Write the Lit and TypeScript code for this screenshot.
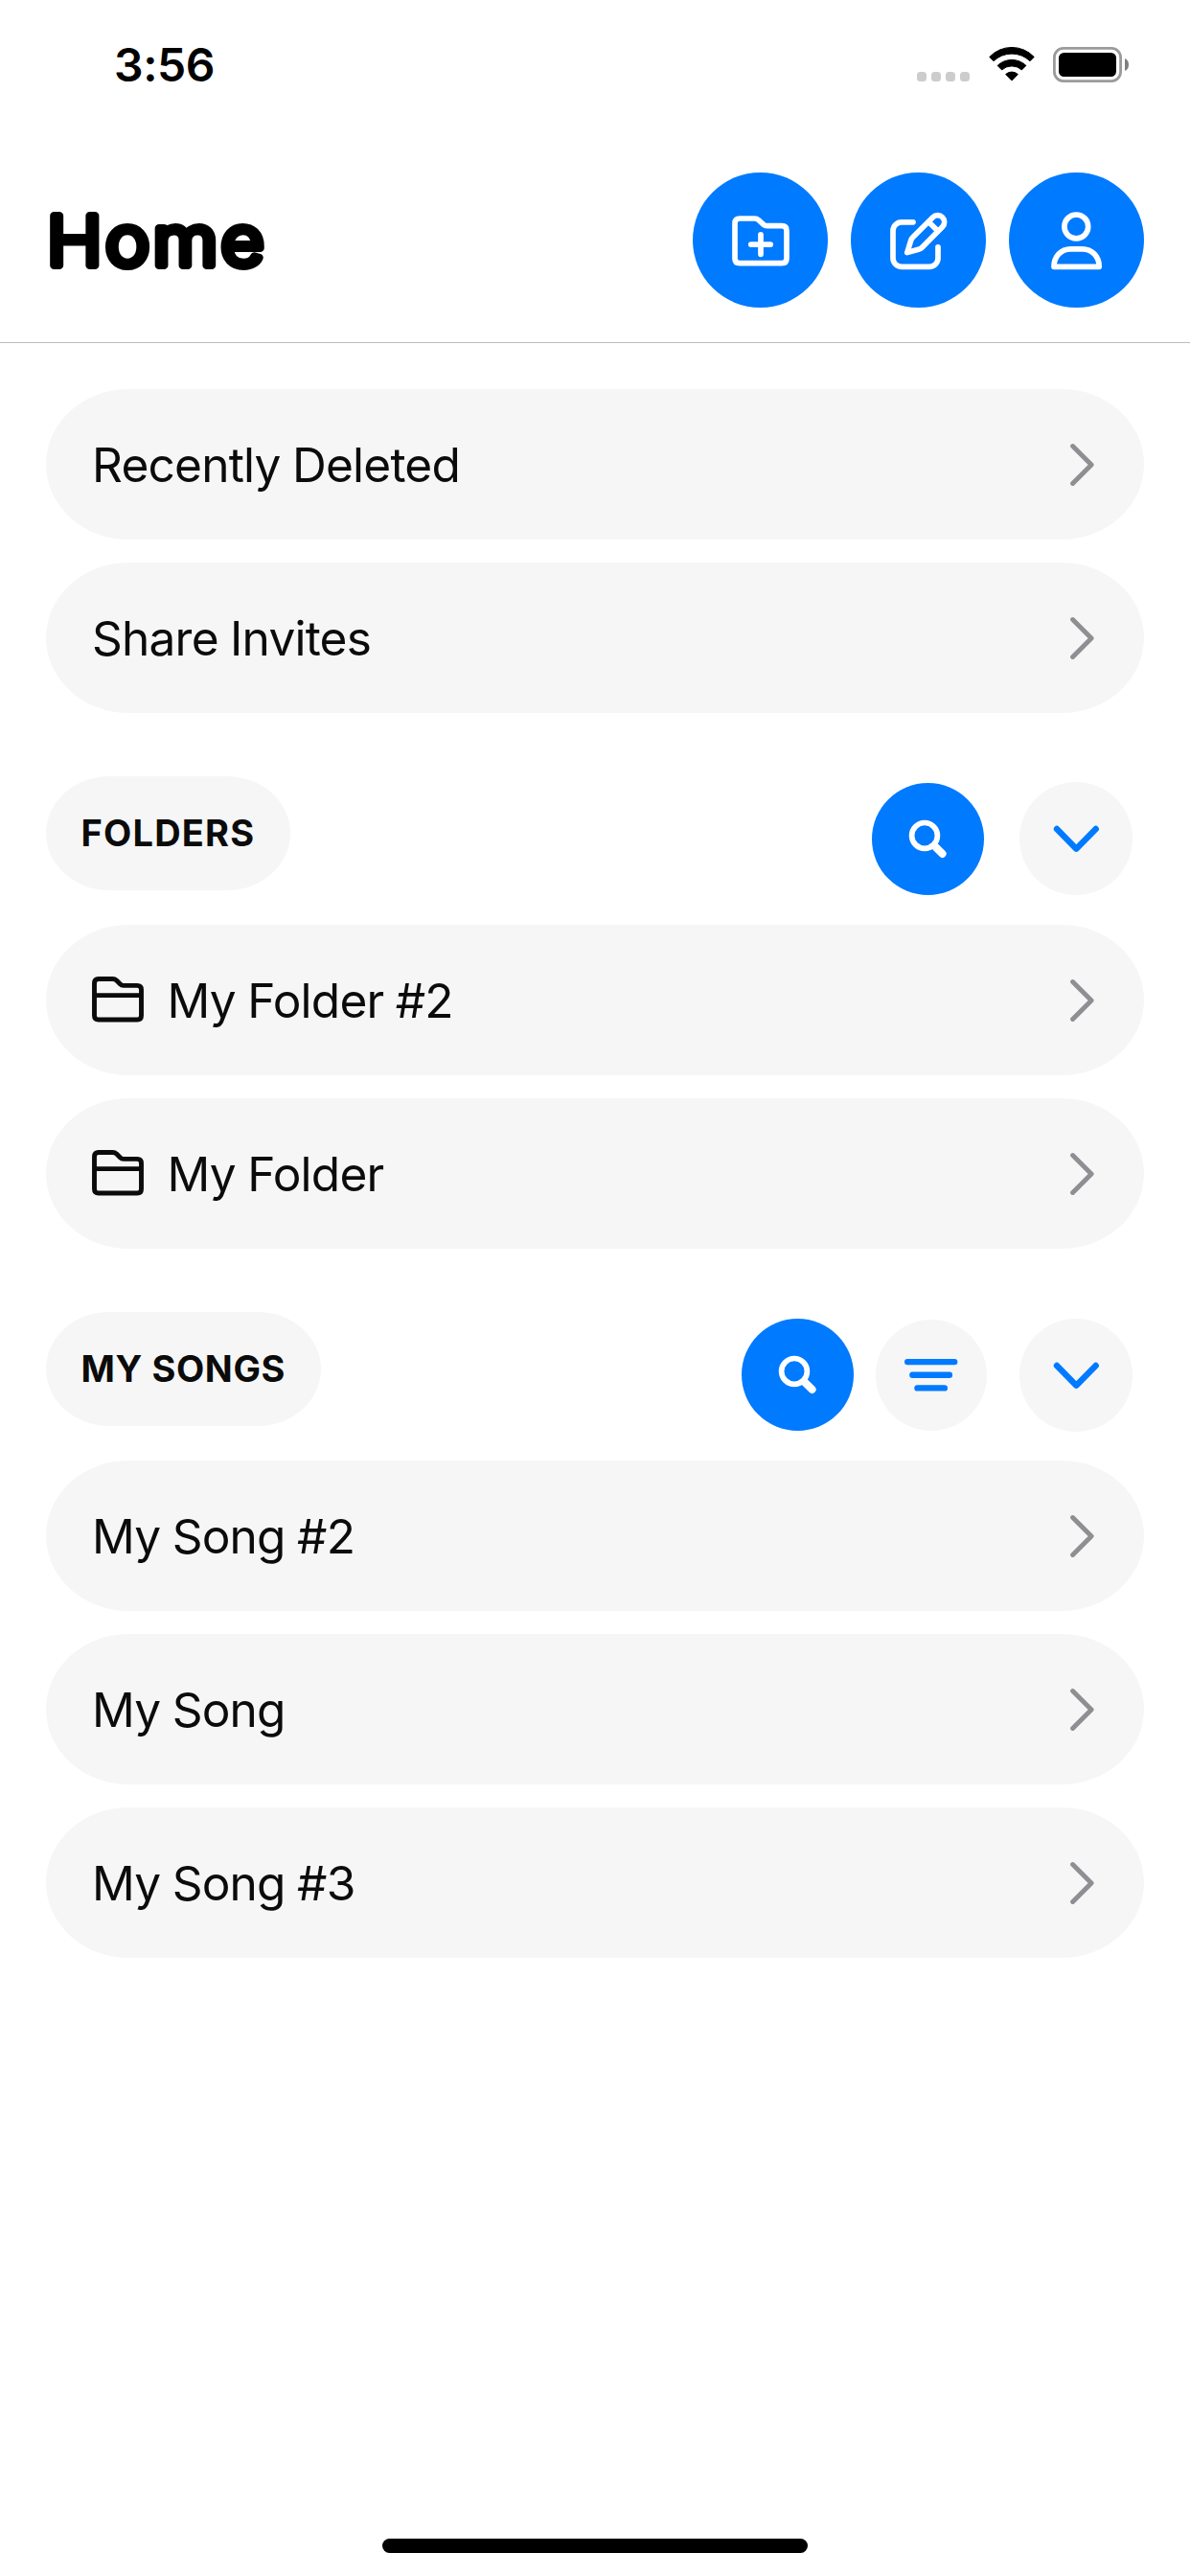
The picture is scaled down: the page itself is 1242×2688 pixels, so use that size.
import { LitElement, html, css, svg } from "lit";
import { customElement, property } from "lit/decorators.js";
import { classMap } from "lit/directives/class-map.js";

const folderPlus = svg`<svg viewBox="0 0 141 141" class="glyph"><path d="M49 48H64.5Q67 48 68.6 49.5L74 54.4Q75.4 55.7 77.5 55.7H93Q98 55.7 98 60.7V89.7Q98 94.7 93 94.7H49Q44 94.7 44 89.7V53Q44 48 49 48ZM60.8 75.1H81.2M71 64.9V85.3"/></svg>`;
const compose = svg`<svg viewBox="0 0 141 141" class="glyph"><path d="M65 51.8H53a9 9 0 0 0-9 9V89.3a9 9 0 0 0 9 9H82a9 9 0 0 0 9-9V77.8"/><path d="M85.6 46.7L64.8 67.4Q63.4 68.8 62.8 70.6L58.8 83.6L71.6 79.9Q73.4 79.2 74.8 77.7L95.6 56.7A7.07 7.07 0 0 0 85.6 46.7ZM81.2 51.5L90.8 61.1"/></svg>`;
const person = svg`<svg viewBox="0 0 141 141" class="glyph"><circle cx="70.3" cy="56.4" r="12.4"/><path d="M47 98.3C47 87.6 54.4 79.8 64.5 79.8H76.4C86.8 79.8 94.2 87.6 94.2 98.3Z"/></svg>`;
const search = svg`<svg viewBox="0 0 117 117" class="glyph"><circle cx="55" cy="54.9" r="13.4"/><path class="thick" d="M66.5 66.8L73.6 73.9"/></svg>`;
const chevronDown = svg`<svg viewBox="0 0 118 118" class="glyph"><path class="medium" d="M39 49L59.3 69.7L79.7 49"/></svg>`;
const filter = svg`<svg viewBox="0 0 116 116" class="glyph"><path class="medium" d="M33.2 44.1H82.2M38.4 57.7H76.9M43.5 71.4H71.8"/></svg>`;
const folder = svg`<svg width="54" height="48" viewBox="0 0 54 48" class="glyph"><path class="thin" d="M6.8 2.5H21.5Q24 2.5 25.6 4L29.3 7.8Q30.8 9.4 33 9.4H47.2Q51.5 9.4 51.5 13.7V40.7Q51.5 45 47.2 45H6.8Q2.5 45 2.5 40.7V6.8Q2.5 2.5 6.8 2.5ZM2.5 19.6H51.5"/></svg>`;
const disclosure = svg`<svg width="26" height="44" viewBox="0 0 26 44" class="glyph"><path class="thin" d="M2.6 2.6L22.1 22L2.6 41.4"/></svg>`;

const glyphStyles = css`
  .glyph {
    display: block;
    fill: none;
    stroke: currentColor;
    stroke-width: 5.7;
    stroke-linecap: round;
    stroke-linejoin: round;
  }
  .thin {
    stroke-width: 4.9;
  }
  .medium {
    stroke-width: 6.4;
  }
  .thick {
    stroke-width: 8;
  }
`;

@customElement("status-bar")
class StatusBar extends LitElement {
  static styles = css`
    :host {
      display: flex;
      justify-content: space-between;
      box-sizing: border-box;
      height: 132px;
      padding: 40px 64px 0 119px;
    }
    .time {
      font-size: 48px;
      font-weight: 600;
      line-height: 55px;
      letter-spacing: -0.4px;
    }
    .indicators {
      display: flex;
      align-items: flex-start;
      padding-top: 9px;
    }
    .dots {
      display: flex;
      gap: 5px;
      padding-top: 26px;
      margin-right: 20px;
    }
    .dot {
      width: 10px;
      height: 10px;
      border-radius: 3.5px;
      background: #cccccc;
    }
    .wifi {
      display: block;
      margin-right: 19px;
    }
    .battery {
      display: block;
    }
  `;
  render() {
    return html`
      <div class="time">3:56</div>
      <div class="indicators">
        <div class="dots">${[0, 1, 2, 3].map(() => html`<div class="dot"></div>`)}</div>
        <svg class="wifi" width="48" height="36" viewBox="0 0 48 36">
          <g stroke="#000" stroke-width="1" stroke-linejoin="round">
            <path d="M.8 10.4A32 32 0 0 1 47.2 10.4L43 14.7A27.5 27.5 0 0 0 5 14.7Z" />
            <path d="M9.1 19.4A21.6 21.6 0 0 1 38.9 19.4L34.4 23.9A15.5 15.5 0 0 0 13.6 23.9Z" />
            <path d="M17.7 28.5A9.4 9.4 0 0 1 30.3 28.5L24 35Z" />
          </g>
        </svg>
        <svg class="battery" width="79" height="37" viewBox="0 0 79 37">
          <rect x="1.4" y="1.4" width="69.2" height="34.2" rx="9.5" fill="none" stroke="#9b9b9b" stroke-width="2.8" />
          <rect x="6" y="6" width="60" height="25" rx="5.5" />
          <path d="M75 12Q79 13.6 79 18.5T75 25Z" fill="#808080" />
        </svg>
      </div>
    `;
  }
}

@customElement("round-button")
class RoundButton extends LitElement {
  @property({ attribute: false }) icon: unknown;
  @property() kind = "primary";
  static styles = [
    glyphStyles,
    css`
      :host {
        display: block;
        flex: none;
      }
      .button {
        display: block;
        width: 100%;
        height: 100%;
        padding: 0;
        border: 0;
        border-radius: 50%;
        background: #007aff;
        color: #fff;
      }
      .soft {
        background: #f6f6f6;
        color: #007aff;
      }
    `,
  ];
  render() {
    return html`<button class=${classMap({ button: true, soft: this.kind === "soft" })}>${this.icon}</button>`;
  }
}

@customElement("list-row")
class ListRow extends LitElement {
  @property() label = "";
  @property({ attribute: false }) icon: unknown = null;
  static styles = [
    glyphStyles,
    css`
      :host {
        display: flex;
        align-items: center;
        box-sizing: border-box;
        height: 157px;
        padding: 0 51px 0 48px;
        border-radius: 86px / 78.5px;
        background: #f6f6f6;
        color: #0b0b0b;
      }
      .icon {
        margin-right: 24.5px;
        padding-bottom: 1px;
      }
      .label {
        flex: 1;
        padding-top: 1px;
        font-size: 49.6px;
        line-height: 60px;
        letter-spacing: -0.8px;
        word-spacing: -0.8px;
        white-space: nowrap;
      }
      .more {
        color: #8e8e93;
        padding-top: 1px;
      }
    `,
  ];
  render() {
    return html`
      ${this.icon ? html`<div class="icon">${this.icon}</div>` : null}
      <div class="label">${this.label}</div>
      <div class="more">${disclosure}</div>
    `;
  }
}

@customElement("app-root")
class AppRoot extends LitElement {
  static styles = css`
    :host {
      display: flex;
      flex-direction: column;
      box-sizing: border-box;
      height: 2688px;
      padding-bottom: 24px;
      background: #fff;
      color: #000;
      font-family: Inter, "Liberation Sans", sans-serif;
    }
    .header {
      display: flex;
      justify-content: space-between;
      padding: 48px 48px 36px;
      border-bottom: 1px solid #bdbdc0;
    }
    .title {
      margin: 0;
      height: 141px;
    }
    .title-art {
      display: block;
    }
    .title-text {
      font-size: 72px;
      font-weight: 300;
      letter-spacing: 3.1px;
      stroke: #000;
      stroke-width: 8px;
      stroke-linejoin: round;
      stroke-linecap: round;
    }
    .header-actions {
      display: flex;
      gap: 24px;
    }
    .large {
      width: 141px;
      height: 141px;
    }
    .content {
      flex: 1;
      padding: 48px 48px 0;
    }
    .rows {
      display: flex;
      flex-direction: column;
      gap: 24px;
    }
    .section {
      display: flex;
      justify-content: space-between;
      align-items: flex-start;
      height: 119px;
      margin: 66px 0 36px;
    }
    .tag {
      display: flex;
      align-items: center;
      box-sizing: border-box;
      height: 119px;
      padding: 0 0 2px 36.5px;
      border-radius: 66px / 59.5px;
      background: #f6f6f6;
      color: #0b0b0b;
      font-size: 38px;
      font-weight: 700;
      letter-spacing: 0.6px;
      white-space: nowrap;
    }
    .folders-tag {
      width: 255px;
      letter-spacing: 1.2px;
    }
    .songs-tag {
      width: 287px;
    }
    .tools {
      display: flex;
      padding: 6px 12px 0 0;
    }
    .songs-tools {
      padding-top: 7px;
    }
    .find {
      width: 117px;
      height: 117px;
      margin: 1px 37px 0 0;
    }
    .songs-tools .find {
      margin: 0 23px 0 0;
    }
    .sort {
      width: 116px;
      height: 116px;
      margin: 1px 34px 0 0;
    }
    .collapse {
      width: 118px;
      height: 118px;
    }
    .home-indicator {
      align-self: center;
      width: 444px;
      height: 15px;
      border-radius: 7.5px;
      background: #000;
    }
  `;
  render() {
    return html`
      <status-bar></status-bar>
      <header class="header">
        <h1 class="title">
          <svg class="title-art" width="300" height="141" viewBox="0 0 300 141">
            <text class="title-text" x="1" y="97" transform="scale(1.08 1)">Home</text>
          </svg>
        </h1>
        <div class="header-actions">
          ${[folderPlus, compose, person].map((i) => html`<round-button class="large" .icon=${i}></round-button>`)}
        </div>
      </header>
      <main class="content">
        <div class="rows">
          ${["Recently Deleted", "Share Invites"].map((l) => html`<list-row .label=${l}></list-row>`)}
        </div>
        <div class="section">
          <div class="tag folders-tag">FOLDERS</div>
          <div class="tools">
            <round-button class="find" .icon=${search}></round-button>
            <round-button class="collapse" kind="soft" .icon=${chevronDown}></round-button>
          </div>
        </div>
        <div class="rows">
          ${["My Folder #2", "My Folder"].map((l) => html`<list-row .label=${l} .icon=${folder}></list-row>`)}
        </div>
        <div class="section">
          <div class="tag songs-tag">MY SONGS</div>
          <div class="tools songs-tools">
            <round-button class="find" .icon=${search}></round-button>
            <round-button class="sort" kind="soft" .icon=${filter}></round-button>
            <round-button class="collapse" kind="soft" .icon=${chevronDown}></round-button>
          </div>
        </div>
        <div class="rows">
          ${["My Song #2", "My Song", "My Song #3"].map((l) => html`<list-row .label=${l}></list-row>`)}
        </div>
      </main>
      <div class="home-indicator"></div>
    `;
  }
}
